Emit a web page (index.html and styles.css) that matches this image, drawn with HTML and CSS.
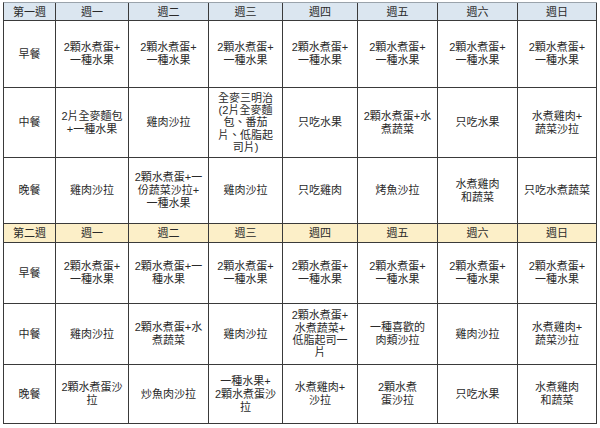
FILE: index.html
```html
<!DOCTYPE html>
<html lang="zh-Hant">
<head>
<meta charset="utf-8">
<title>兩週菜單</title>
<link rel="stylesheet" href="styles.css">
</head>
<body>
<table class="menu">
  <colgroup>
    <col class="c0"><col class="c1"><col class="c2"><col class="c3"><col class="c4"><col class="c5"><col class="c6"><col class="c7">
  </colgroup>
  <tbody>
    <tr class="head head-blue">
      <td>第一週</td><td>週一</td><td>週二</td><td>週三</td><td>週四</td><td>週五</td><td>週六</td><td>週日</td>
    </tr>
    <tr class="r67">
      <td>早餐</td>
      <td><span class="ln">2顆水煮蛋+</span><span class="ln">一種水果</span></td>
      <td><span class="ln">2顆水煮蛋+</span><span class="ln">一種水果</span></td>
      <td><span class="ln">2顆水煮蛋+</span><span class="ln">一種水果</span></td>
      <td><span class="ln">2顆水煮蛋+</span><span class="ln">一種水果</span></td>
      <td><span class="ln">2顆水煮蛋+</span><span class="ln">一種水果</span></td>
      <td><span class="ln">2顆水煮蛋+</span><span class="ln">一種水果</span></td>
      <td><span class="ln">2顆水煮蛋+</span><span class="ln">一種水果</span></td>
    </tr>
    <tr class="r70">
      <td>中餐</td>
      <td><span class="ln">2片全麥麵包</span><span class="ln">+一種水果</span></td>
      <td>雞肉沙拉</td>
      <td class="tight"><span class="ln">全麥三明治</span><span class="ln">(2片全麥麵</span><span class="ln">包、番茄</span><span class="ln">片、低脂起</span><span class="ln">司片)</span></td>
      <td>只吃水果</td>
      <td><span class="ln">2顆水煮蛋+水</span><span class="ln">煮蔬菜</span></td>
      <td>只吃水果</td>
      <td><span class="ln">水煮雞肉+</span><span class="ln">蔬菜沙拉</span></td>
    </tr>
    <tr class="r66">
      <td>晚餐</td>
      <td>雞肉沙拉</td>
      <td><span class="ln">2顆水煮蛋+一</span><span class="ln">份蔬菜沙拉+</span><span class="ln">一種水果</span></td>
      <td>雞肉沙拉</td>
      <td>只吃雞肉</td>
      <td>烤魚沙拉</td>
      <td><span class="ln">水煮雞肉</span><span class="ln">和蔬菜</span></td>
      <td>只吃水煮蔬菜</td>
    </tr>
    <tr class="head head-yellow">
      <td>第二週</td><td>週一</td><td>週二</td><td>週三</td><td>週四</td><td>週五</td><td>週六</td><td>週日</td>
    </tr>
    <tr class="r61">
      <td>早餐</td>
      <td><span class="ln">2顆水煮蛋+</span><span class="ln">一種水果</span></td>
      <td><span class="ln">2顆水煮蛋+一</span><span class="ln">種水果</span></td>
      <td><span class="ln">2顆水煮蛋+</span><span class="ln">一種水果</span></td>
      <td><span class="ln">2顆水煮蛋+</span><span class="ln">一種水果</span></td>
      <td><span class="ln">2顆水煮蛋+</span><span class="ln">一種水果</span></td>
      <td><span class="ln">2顆水煮蛋+</span><span class="ln">一種水果</span></td>
      <td><span class="ln">2顆水煮蛋+</span><span class="ln">一種水果</span></td>
    </tr>
    <tr class="r61">
      <td>中餐</td>
      <td>雞肉沙拉</td>
      <td><span class="ln">2顆水煮蛋+水</span><span class="ln">煮蔬菜</span></td>
      <td>雞肉沙拉</td>
      <td class="tight"><span class="ln">2顆水煮蛋+</span><span class="ln">水煮蔬菜+</span><span class="ln">低脂起司一</span><span class="ln">片</span></td>
      <td><span class="ln">一種喜歡的</span><span class="ln">肉類沙拉</span></td>
      <td>雞肉沙拉</td>
      <td><span class="ln">水煮雞肉+</span><span class="ln">蔬菜沙拉</span></td>
    </tr>
    <tr class="r59">
      <td>晚餐</td>
      <td><span class="ln">2顆水煮蛋沙</span><span class="ln">拉</span></td>
      <td>炒魚肉沙拉</td>
      <td><span class="ln">一種水果+</span><span class="ln">2顆水煮蛋沙</span><span class="ln">拉</span></td>
      <td><span class="ln">水煮雞肉+</span><span class="ln">沙拉</span></td>
      <td><span class="ln">2顆水煮</span><span class="ln">蛋沙拉</span></td>
      <td>只吃水果</td>
      <td><span class="ln">水煮雞肉</span><span class="ln">和蔬菜</span></td>
    </tr>
  </tbody>
</table>
</body>
</html>
```

FILE: styles.css
```css
html, body {
  margin: 0;
  padding: 0;
  background: #ffffff;
}

body {
  padding: 2px 0 0 3px;
  font-family: "Liberation Sans", "Noto Sans CJK TC", "Noto Sans CJK SC", sans-serif;
  font-size: 11px;
  color: #2a2a2a;
}

.menu {
  border-collapse: separate;
  border-spacing: 0;
  table-layout: fixed;
  width: 593px;
  border-left: 1px solid #3a3a3a;
  border-top: 1px solid #9aa3ab;
  background: #ffffff;
}

.c0 { width: 52px; }
.c1 { width: 73px; }
.c2 { width: 80px; }
.c3 { width: 74px; }
.c4 { width: 75px; }
.c5 { width: 80px; }
.c6 { width: 80px; }
.c7 { width: 79px; }

.menu td {
  box-sizing: border-box;
  padding: 0 2px;
  border-right: 1px solid #3a3a3a;
  border-bottom: 1px solid #3a3a3a;
  text-align: center;
  vertical-align: middle;
  line-height: 13px;
  white-space: nowrap;
  overflow: hidden;
}

.ln {
  display: block;
  height: 13px;
}

.tight .ln {
  height: 12.4px;
  line-height: 12.4px;
}

.head td { height: 18px; line-height: 14px; }
.head-yellow td { height: 19px; }

.head-blue td { background: #dbe6f0; }
.head-yellow td { background: #fcefc8; }

.r67 td { height: 67px; }
.r70 td { height: 70px; }
.r66 td { height: 66px; }
.r61 td { height: 61px; }
.r59 td { height: 59px; }
```
